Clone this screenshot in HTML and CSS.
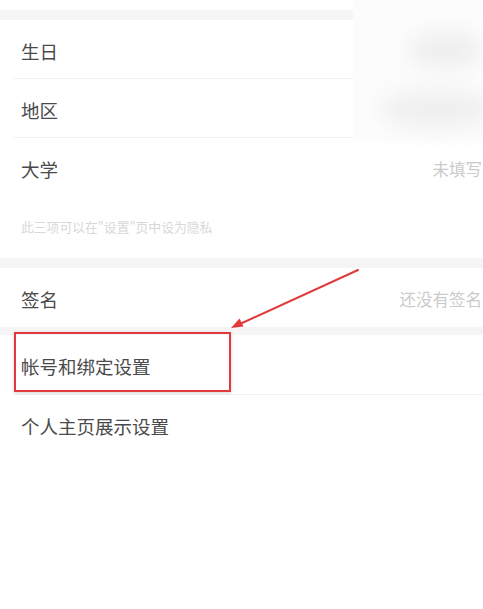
FILE: index.html
```html
<!DOCTYPE html>
<html lang="zh-CN">
<head>
<meta charset="utf-8">
<title>个人资料</title>
<link rel="stylesheet" href="styles.css">
</head>
<body>
<div class="page">
  <div class="top-gap"></div>
  <div class="band"></div>
  <div class="row divided"><span class="label">生日</span></div>
  <div class="row divided"><span class="label">地区</span></div>
  <div class="row"><span class="label">大学</span><span class="value">未填写</span></div>
  <div class="caption">此三项可以在"设置"页中设为隐私</div>
  <div class="band"></div>
  <div class="row"><span class="label">签名</span><span class="value">还没有签名</span></div>
  <div class="band short"></div>
  <div class="row tall divided full"><span class="label">帐号和绑定设置</span></div>
  <div class="row tall"><span class="label">个人主页展示设置</span></div>

  <div class="blur-mask">
    <div class="blob b1"></div>
    <div class="blob b2"></div>
  </div>
  <div class="highlight"></div>
  <svg class="arrow" width="483" height="609" viewBox="0 0 483 609">
    <line x1="358" y1="270" x2="241" y2="323.5" stroke="#e03a3c" stroke-width="2" stroke-linecap="round"/>
    <polygon points="231,328 243.5,326.5 239.5,318.5" fill="#e03a3c"/>
  </svg>
</div>
</body>
</html>
```

FILE: styles.css
```css
* { box-sizing: border-box; }
html, body {
  margin: 0;
  padding: 0;
  background: #ffffff;
}
body {
  font-family: "Noto Sans CJK SC", "Noto Sans", sans-serif;
  color: #484848;
}
.page {
  position: relative;
  width: 483px;
  height: 609px;
  overflow: hidden;
  background: #ffffff;
}
.top-gap { height: 10px; }
.band {
  height: 10px;
  background: #f5f5f5;
}
.band.short { height: 8px; }
.row {
  position: relative;
  height: 59px;
  display: flex;
  align-items: center;
  justify-content: space-between;
  padding: 3px 1px 0 21px;
}
.row.tall { height: 60px; }
.row.divided::after {
  content: "";
  position: absolute;
  left: 14px;
  right: 0;
  bottom: 0;
  height: 1px;
  background: #f1f1f1;
}
.label {
  font-size: 18.5px;
  line-height: 1;
  color: #4a4a4a;
}
.value {
  font-size: 16.5px;
  line-height: 1;
  color: #cbcbcb;
}
.caption {
  height: 61px;
  padding: 22px 0 0 21px;
  font-size: 12.8px;
  line-height: 16px;
  color: #d8d8d8;
}
.blur-mask {
  position: absolute;
  left: 353px;
  top: 0;
  width: 130px;
  height: 152px;
  background: linear-gradient(to bottom, #fcfcfc 0%, #fcfcfc 88%, rgba(255,255,255,0) 100%);
  overflow: hidden;
}
.blob {
  position: absolute;
  background: #eeeeee;
  border-radius: 50%;
  filter: blur(10px);
}
.b1 { left: 56px; top: 32px; width: 74px; height: 36px; }
.b2 { left: 28px; top: 90px; width: 112px; height: 38px; background: #efefef; }
.highlight {
  position: absolute;
  left: 14px;
  top: 332px;
  width: 217px;
  height: 60px;
  border: 2px solid #e0393e;
  box-shadow: 0 1px 3px rgba(0,0,0,0.18);
}
.arrow {
  position: absolute;
  left: 0;
  top: 0;
  pointer-events: none;
}
```
